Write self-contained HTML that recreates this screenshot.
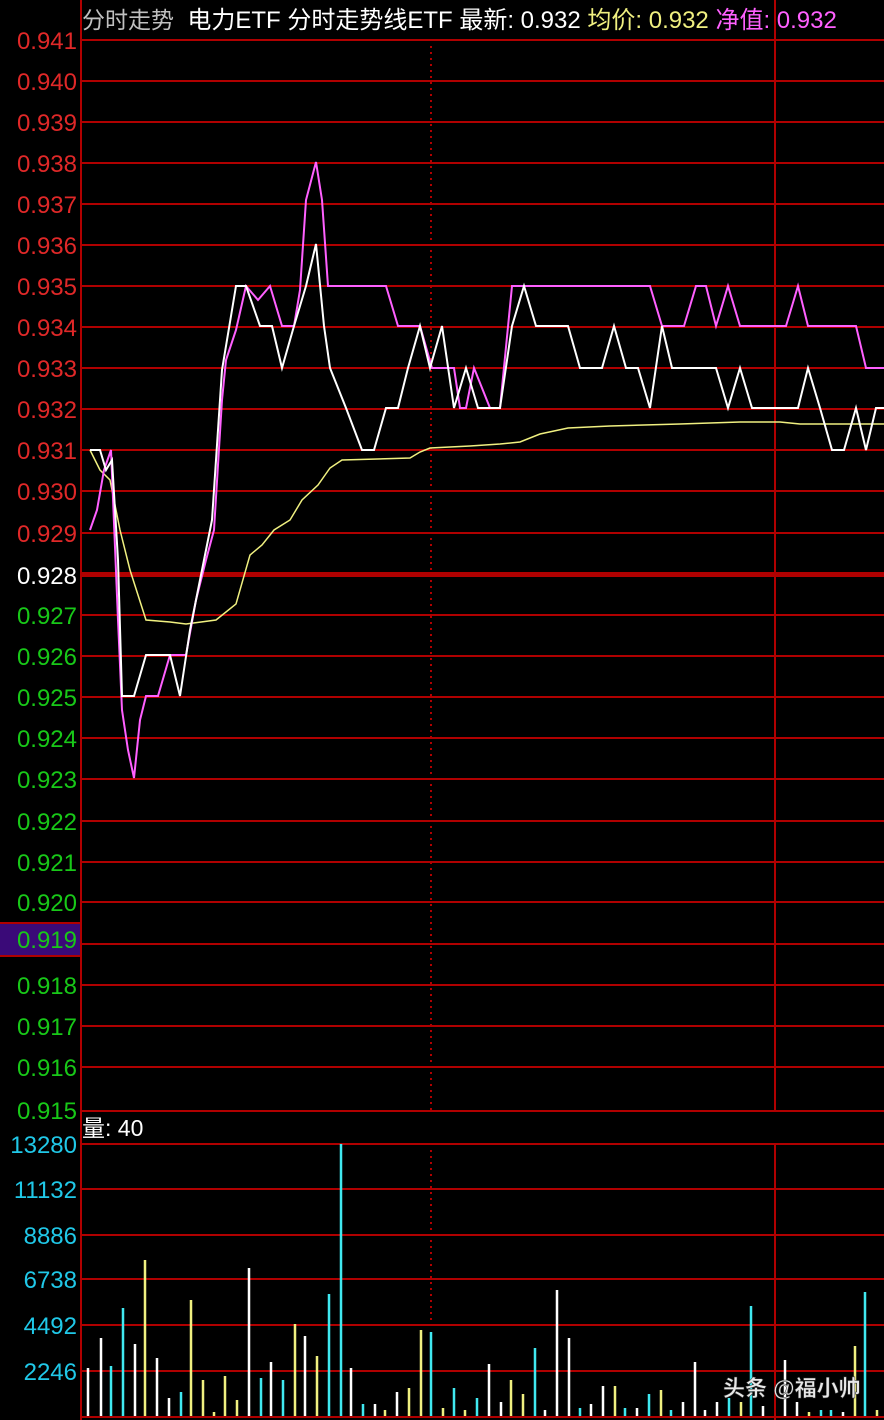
<!DOCTYPE html>
<html><head><meta charset="utf-8"><style>
html,body{margin:0;padding:0;background:#000;width:884px;height:1420px;overflow:hidden}
svg{display:block}
text{font-family:"Liberation Sans","Noto Sans CJK SC",sans-serif}
</style></head><body>
<svg width="884" height="1420" viewBox="0 0 884 1420" xmlns="http://www.w3.org/2000/svg">
<rect width="884" height="1420" fill="#000"/>
<rect x="0" y="923" width="80" height="33" fill="#3a0a78"/>
<line x1="0" y1="923" x2="80" y2="923" stroke="#b00000" stroke-width="2"/>
<line x1="0" y1="956" x2="80" y2="956" stroke="#b00000" stroke-width="2"/>
<g stroke="#b00000" stroke-width="2">
<line x1="81" y1="40" x2="884" y2="40"/><line x1="81" y1="81" x2="884" y2="81"/><line x1="81" y1="122" x2="884" y2="122"/><line x1="81" y1="163" x2="884" y2="163"/><line x1="81" y1="204" x2="884" y2="204"/><line x1="81" y1="245" x2="884" y2="245"/><line x1="81" y1="286" x2="884" y2="286"/><line x1="81" y1="327" x2="884" y2="327"/><line x1="81" y1="368" x2="884" y2="368"/><line x1="81" y1="409" x2="884" y2="409"/><line x1="81" y1="450" x2="884" y2="450"/><line x1="81" y1="491" x2="884" y2="491"/><line x1="81" y1="533" x2="884" y2="533"/>
<line x1="81" y1="615" x2="884" y2="615"/><line x1="81" y1="656" x2="884" y2="656"/><line x1="81" y1="697" x2="884" y2="697"/><line x1="81" y1="738" x2="884" y2="738"/><line x1="81" y1="779" x2="884" y2="779"/><line x1="81" y1="821" x2="884" y2="821"/><line x1="81" y1="862" x2="884" y2="862"/><line x1="81" y1="902" x2="884" y2="902"/><line x1="81" y1="944" x2="884" y2="944"/><line x1="81" y1="985" x2="884" y2="985"/><line x1="81" y1="1026" x2="884" y2="1026"/><line x1="81" y1="1067" x2="884" y2="1067"/><line x1="81" y1="1111" x2="884" y2="1111"/>
<line x1="81" y1="1144" x2="884" y2="1144"/><line x1="81" y1="1189" x2="884" y2="1189"/><line x1="81" y1="1235" x2="884" y2="1235"/><line x1="81" y1="1279" x2="884" y2="1279"/><line x1="81" y1="1325" x2="884" y2="1325"/><line x1="81" y1="1371" x2="884" y2="1371"/><line x1="81" y1="1417" x2="884" y2="1417"/>
<line x1="81" y1="0" x2="81" y2="1420"/>
<line x1="775" y1="0" x2="775" y2="1111"/><line x1="775" y1="1144" x2="775" y2="1420"/>
</g>
<line x1="81" y1="574.5" x2="884" y2="574.5" stroke="#b00000" stroke-width="5"/>
<line x1="431" y1="46" x2="431" y2="1111" stroke="#b00000" stroke-width="2" stroke-dasharray="2,4"/>
<line x1="431" y1="1150" x2="431" y2="1330" stroke="#b00000" stroke-width="2" stroke-dasharray="2,4"/>
<g font-size="24" text-anchor="end">
<g fill="#e02828"><text x="77" y="49">0.941</text><text x="77" y="90">0.940</text><text x="77" y="131">0.939</text><text x="77" y="172">0.938</text><text x="77" y="213">0.937</text><text x="77" y="254">0.936</text><text x="77" y="295">0.935</text><text x="77" y="336">0.934</text><text x="77" y="377">0.933</text><text x="77" y="418">0.932</text><text x="77" y="459">0.931</text><text x="77" y="500">0.930</text><text x="77" y="542">0.929</text></g>
<text x="77" y="584" fill="#fff">0.928</text>
<g fill="#18c818"><text x="77" y="624">0.927</text><text x="77" y="665">0.926</text><text x="77" y="706">0.925</text><text x="77" y="747">0.924</text><text x="77" y="788">0.923</text><text x="77" y="830">0.922</text><text x="77" y="871">0.921</text><text x="77" y="911">0.920</text><text x="77" y="948">0.919</text><text x="77" y="994">0.918</text><text x="77" y="1035">0.917</text><text x="77" y="1076">0.916</text><text x="77" y="1119">0.915</text></g>
<g fill="#20c8e8"><text x="77" y="1153">13280</text><text x="77" y="1198">11132</text><text x="77" y="1244">8886</text><text x="77" y="1288">6738</text><text x="77" y="1334">4492</text><text x="77" y="1380">2246</text></g>
</g>
<text x="82" y="28" font-size="23" style="white-space:pre"><tspan fill="#c0c0c0">分时走势</tspan><tspan fill="#fff" font-size="24">  电力ETF 分时走势线ETF 最新: 0.932 </tspan><tspan fill="#f0f080" font-size="24">均价: 0.932 </tspan><tspan fill="#ff60ff" font-size="24">净值: 0.932</tspan></text>
<text x="82" y="1136" font-size="23" fill="#fff">量: 40</text>
<polyline fill="none" stroke="#f0f080" stroke-width="1.5" points="90,450 100,470 110,480 120,530 130,570 146,620 170,622 186,624 216,620 236,604 250,555 262,545 274,530 290,520 302,500 318,485 330,468 342,460 410,458 420,452 430,448 470,446 500,444 520,442 540,434 568,428 610,426 680,424 740,422 780,422 800,424 884,424"/>
<polyline fill="none" stroke="#ff60ff" stroke-width="2" points="90,530 97,510 104,470 111,450 118,620 122,710 128,750 134,778 140,720 146,696 158,696 170,655 186,655 196,600 206,560 214,530 222,400 226,360 236,330 246,286 258,300 270,286 282,326 294,326 300,290 306,200 316,162 322,200 328,286 386,286 398,326 420,326 432,368 454,368 460,408 466,408 474,368 490,408 500,408 512,286 650,286 662,326 684,326 696,286 706,286 716,326 728,286 740,326 786,326 798,286 808,326 856,326 866,368 884,368"/>
<polyline fill="none" stroke="#fff" stroke-width="2" points="90,450 100,450 106,470 112,460 118,560 122,696 134,696 146,655 170,655 180,696 190,630 200,580 212,520 222,370 236,286 246,286 260,326 272,326 282,368 294,326 306,286 316,244 324,326 330,368 346,408 362,450 374,450 386,408 398,408 408,368 420,326 430,368 442,326 454,408 466,368 478,408 500,408 512,326 524,286 536,326 568,326 580,368 602,368 614,326 626,368 638,368 650,408 662,326 672,368 716,368 728,408 740,368 752,408 798,408 808,368 820,408 832,450 844,450 856,408 866,450 876,408 884,408"/>
<g stroke-width="2.5">
<g stroke="#fff"><line x1="88" y1="1416" x2="88" y2="1368"/><line x1="101" y1="1416" x2="101" y2="1338"/><line x1="135" y1="1416" x2="135" y2="1344"/><line x1="157" y1="1416" x2="157" y2="1358"/><line x1="169" y1="1416" x2="169" y2="1398"/><line x1="249" y1="1416" x2="249" y2="1268"/><line x1="271" y1="1416" x2="271" y2="1362"/><line x1="305" y1="1416" x2="305" y2="1336"/><line x1="351" y1="1416" x2="351" y2="1368"/><line x1="375" y1="1416" x2="375" y2="1404"/><line x1="397" y1="1416" x2="397" y2="1392"/><line x1="489" y1="1416" x2="489" y2="1364"/><line x1="501" y1="1416" x2="501" y2="1402"/><line x1="545" y1="1416" x2="545" y2="1410"/><line x1="557" y1="1416" x2="557" y2="1290"/><line x1="569" y1="1416" x2="569" y2="1338"/><line x1="591" y1="1416" x2="591" y2="1404"/><line x1="603" y1="1416" x2="603" y2="1386"/><line x1="637" y1="1416" x2="637" y2="1408"/><line x1="683" y1="1416" x2="683" y2="1402"/><line x1="695" y1="1416" x2="695" y2="1362"/><line x1="705" y1="1416" x2="705" y2="1410"/><line x1="717" y1="1416" x2="717" y2="1402"/><line x1="763" y1="1416" x2="763" y2="1406"/><line x1="785" y1="1416" x2="785" y2="1360"/><line x1="797" y1="1416" x2="797" y2="1402"/><line x1="843" y1="1416" x2="843" y2="1412"/></g>
<g stroke="#40e8f0"><line x1="111" y1="1416" x2="111" y2="1366"/><line x1="123" y1="1416" x2="123" y2="1308"/><line x1="181" y1="1416" x2="181" y2="1392"/><line x1="261" y1="1416" x2="261" y2="1378"/><line x1="283" y1="1416" x2="283" y2="1380"/><line x1="329" y1="1416" x2="329" y2="1294"/><line x1="341" y1="1416" x2="341" y2="1144"/><line x1="363" y1="1416" x2="363" y2="1404"/><line x1="431" y1="1416" x2="431" y2="1332"/><line x1="454" y1="1416" x2="454" y2="1388"/><line x1="477" y1="1416" x2="477" y2="1398"/><line x1="535" y1="1416" x2="535" y2="1348"/><line x1="580" y1="1416" x2="580" y2="1408"/><line x1="625" y1="1416" x2="625" y2="1408"/><line x1="649" y1="1416" x2="649" y2="1394"/><line x1="671" y1="1416" x2="671" y2="1410"/><line x1="729" y1="1416" x2="729" y2="1398"/><line x1="751" y1="1416" x2="751" y2="1306"/><line x1="821" y1="1416" x2="821" y2="1410"/><line x1="831" y1="1416" x2="831" y2="1410"/><line x1="865" y1="1416" x2="865" y2="1292"/></g>
<g stroke="#f0f080"><line x1="145" y1="1416" x2="145" y2="1260"/><line x1="191" y1="1416" x2="191" y2="1300"/><line x1="203" y1="1416" x2="203" y2="1380"/><line x1="214" y1="1416" x2="214" y2="1412"/><line x1="225" y1="1416" x2="225" y2="1376"/><line x1="237" y1="1416" x2="237" y2="1400"/><line x1="295" y1="1416" x2="295" y2="1324"/><line x1="317" y1="1416" x2="317" y2="1356"/><line x1="385" y1="1416" x2="385" y2="1410"/><line x1="409" y1="1416" x2="409" y2="1388"/><line x1="421" y1="1416" x2="421" y2="1330"/><line x1="443" y1="1416" x2="443" y2="1408"/><line x1="465" y1="1416" x2="465" y2="1410"/><line x1="511" y1="1416" x2="511" y2="1380"/><line x1="523" y1="1416" x2="523" y2="1394"/><line x1="615" y1="1416" x2="615" y2="1386"/><line x1="661" y1="1416" x2="661" y2="1390"/><line x1="741" y1="1416" x2="741" y2="1402"/><line x1="809" y1="1416" x2="809" y2="1412"/><line x1="855" y1="1416" x2="855" y2="1346"/><line x1="877" y1="1416" x2="877" y2="1410"/></g>
</g>
<text x="723" y="1396" font-size="22" font-weight="bold" fill="#e8e8e8" stroke="#333" stroke-width="0.5">头条 @福小帅</text>
</svg>
</body></html>
